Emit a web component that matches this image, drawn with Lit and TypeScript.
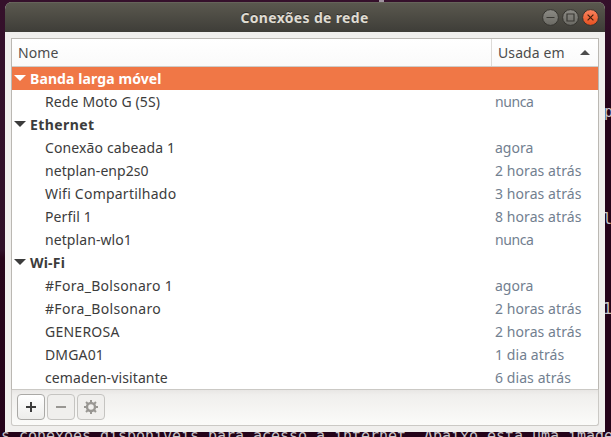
import { LitElement, html, svg, css } from "lit";
import { customElement } from "lit/decorators.js";
import { classMap } from "lit/directives/class-map.js";
import { styleMap } from "lit/directives/style-map.js";

interface Row {
  name: string;
  used?: string;
  group?: boolean;
  selected?: boolean;
  track?: number;
  usedTrack?: number;
}

const ROWS: Row[] = [
  { name: "Banda larga móvel", group: true, selected: true, track: 0.1 },
  { name: "Rede Moto G (5S)", used: "nunca", track: 0.13, usedTrack: -0.4 },
  { name: "Ethernet", group: true, track: 0.4 },
  { name: "Conexão cabeada 1", used: "agora", track: 0.12 },
  { name: "netplan-enp2s0", used: "2 horas atrás", track: 0.07, usedTrack: 0.08 },
  { name: "Wifi Compartilhado", used: "3 horas atrás", track: 0.23, usedTrack: 0.08 },
  { name: "Perfil 1", used: "8 horas atrás", track: 0.12, usedTrack: 0.08 },
  { name: "netplan-wlo1", used: "nunca", track: 0.08, usedTrack: -0.4 },
  { name: "Wi-Fi", group: true, track: 0.2 },
  { name: "#Fora_Bolsonaro 1", used: "agora", track: 0.3 },
  { name: "#Fora_Bolsonaro", used: "2 horas atrás", track: 0.33, usedTrack: 0.08 },
  { name: "GENEROSA", used: "2 horas atrás", track: 0.25, usedTrack: 0.08 },
  { name: "DMGA01", used: "1 dia atrás", track: 0.15, usedTrack: 0.08 },
  { name: "cemaden-visitante", used: "6 dias atrás", track: 0.12, usedTrack: 0.08 },
];

const teeth = [0, 45, 90, 135, 180, 225, 270, 315];

@customElement("app-root")
export class AppRoot extends LitElement {
  static styles = css`
    :host {
      display: block;
      position: relative;
      box-sizing: border-box;
      width: 611px;
      height: 437px;
      padding: 2px 6px 5px 5px;
      overflow: hidden;
      background: linear-gradient(#35102b 0, #2f1027 250px, #270519 258px, #240319 437px);
      font: 14px/23px "Noto Sans", sans-serif;
      color: #3c3c3c;
    }
    .desk {
      position: absolute;
      font: 15px/18px "DejaVu Sans Mono", monospace;
      color: #c8c3c8;
      white-space: pre;
    }
    .side { left: 605px; top: 0; width: 6px; height: 437px; background: linear-gradient(#35102b, #240319 110px); }
    .d1 { left: 604px; top: 103px; }
    .d2 { left: 603px; top: 210px; }
    .d3 { left: 603px; top: 300px; }
    .d4 { left: 1px; top: 427px; letter-spacing: -0.03px; }
    .dash { left: 379px; top: 0; width: 5px; height: 2px; background: #a093a0; }
    .window {
      position: relative;
      display: flex;
      flex-direction: column;
      height: 430px;
      background: #f0efed;
      border-radius: 7px 7px 0 0;
      overflow: hidden;
    }
    .title {
      display: flex;
      align-items: center;
      height: 30px;
      padding: 0 6px 0 62px;
      background: linear-gradient(#5b594f, #3e3d38);
      box-shadow: inset 0 1px #66645a;
      box-sizing: border-box;
      color: #dfdbd2;
      font-weight: 700;
      letter-spacing: 0.33px;
      text-shadow: 0 -1px #2c2b28;
    }
    .title span { flex: 1; text-align: center; }
    .controls { display: flex; gap: 3px; }
    .controls svg { display: block; }
    .frame {
      display: flex;
      flex-direction: column;
      box-sizing: border-box;
      width: 588px;
      margin: 6px 0 0 6px;
    }
    .tree { border: 1px solid #bbb8b3; border-bottom-color: #cbc9c5; background: #fff; }
    .head {
      display: flex;
      height: 27px;
      line-height: 27px;
      border-bottom: 1px solid #cfcdc9;
      background: linear-gradient(#fff, #fafafa);
      color: #4c4c4c;
      letter-spacing: 0.1px;
    }
    .head .name { flex: 1; padding-left: 6px; }
    .head .used {
      display: flex;
      align-items: center;
      gap: 15px;
      width: 107px;
      box-sizing: border-box;
      padding-left: 6px;
      border-left: 1px solid #dddbd8;
    }
    .row { display: flex; height: 23px; }
    .row .name { width: 450px; padding-left: 33px; white-space: pre; }
    .row .used { color: #728090; white-space: pre; }
    .row.group { font-weight: 700; }
    .row.group .name { display: flex; padding-left: 2px; gap: 4px; width: auto; }
    .row.group svg { margin-top: 8px; }
    .row.selected { background: #f07746; color: #fff; }
    .tools {
      display: flex;
      gap: 2px;
      box-sizing: border-box;
      height: 36px;
      padding: 4px 5px;
      border: 1px solid #cbc9c5;
      border-top: 0;
      border-radius: 0 0 3px 3px;
      background: linear-gradient(#e8e6e4, #f0efed 5px, #fbfbf9);
    }
    .tool {
      display: flex;
      align-items: center;
      justify-content: center;
      box-sizing: border-box;
      width: 28px;
      height: 26px;
      border: 1px solid #c5c4c1;
      border-radius: 4px;
      background: #f0efed;
      color: #999793;
    }
    .tool.on {
      border-color: #aaa9a6;
      background: linear-gradient(#fff, #ededeb);
      color: #3c3c3c;
    }
  `;

  private control(kind: "min" | "max" | "close") {
    const close = kind === "close";
    const glyph = {
      min: svg`<path d="M4.5 8.5h8" />`,
      max: svg`<path d="M5 5h7v7h-7z" />`,
      close: svg`<path d="M5.6 5.6l5.8 5.8M11.4 5.6l-5.8 5.8" />`,
    }[kind];
    return html`<svg width="17" height="17" viewBox="0 0 17 17">
      <defs>
        <linearGradient id="fill-${kind}" x1="0" y1="0" x2="0" y2="1">
          <stop offset="0" stop-color=${close ? "#fa8460" : "#8c8b85"} />
          <stop offset="1" stop-color=${close ? "#e6501f" : "#6a6963"} />
        </linearGradient>
      </defs>
      <circle cx="8.5" cy="8.5" r="7.9" fill="url(#fill-${kind})" stroke="#35342f" stroke-width="1" />
      <g fill="none" stroke=${close ? "#44210f" : "#3a3934"} stroke-width="1.2">${glyph}</g>
    </svg>`;
  }

  private row(r: Row) {
    return html`<div class=${classMap({ row: true, group: !!r.group, selected: !!r.selected })}>
      <div class="name" style=${styleMap({ letterSpacing: `${r.track ?? 0}px` })}>${r.group
        ? html`<svg width="12" height="6" viewBox="0 0 12 6"><path d="M0 0h12l-6 6z" fill="currentColor" /></svg>`
        : null}<span>${r.name}</span></div>
      ${r.used
        ? html`<div class="used" style=${styleMap({ letterSpacing: `${r.usedTrack ?? 0}px` })}>${r.used}</div>`
        : null}
    </div>`;
  }

  render() {
    return html`
      <div class="desk side"></div>
      <div class="desk dash"></div>
      <div class="desk d1">p</div>
      <div class="desk d2">l</div>
      <div class="desk d3">1</div>
      <div class="desk d4">s conexões disponíveis para acesso a internet. Abaixo está uma image</div>
      <div class="window">
        <div class="title">
          <span>Conexões de rede</span>
          <div class="controls">${this.control("min")}${this.control("max")}${this.control("close")}</div>
        </div>
        <div class="frame">
          <div class="tree">
            <div class="head">
              <div class="name">Nome</div>
              <div class="used">
                <span>Usada em</span>
                <svg width="10" height="5" viewBox="0 0 10 5"><path d="M0 5h10l-5-5z" fill="#4c4c4c" /></svg>
              </div>
            </div>
            ${ROWS.map((r) => this.row(r))}
          </div>
          <div class="tools">
            <div class="tool on">
              <svg width="16" height="16" viewBox="0 0 16 16"><path d="M3 8h10M8 3v10" stroke="currentColor" stroke-width="2" /></svg>
            </div>
            <div class="tool">
              <svg width="16" height="16" viewBox="0 0 16 16"><path d="M3 8h10" stroke="currentColor" stroke-width="2" /></svg>
            </div>
            <div class="tool">
              <svg width="16" height="16" viewBox="0 0 16 16">
                <circle cx="8" cy="8" r="4" fill="none" stroke="currentColor" stroke-width="2.4" />
                ${teeth.map((a) => svg`<path d="M8 1v3" stroke="currentColor" stroke-width="2" transform="rotate(${a} 8 8)" />`)}
              </svg>
            </div>
          </div>
        </div>
      </div>
    `;
  }
}
